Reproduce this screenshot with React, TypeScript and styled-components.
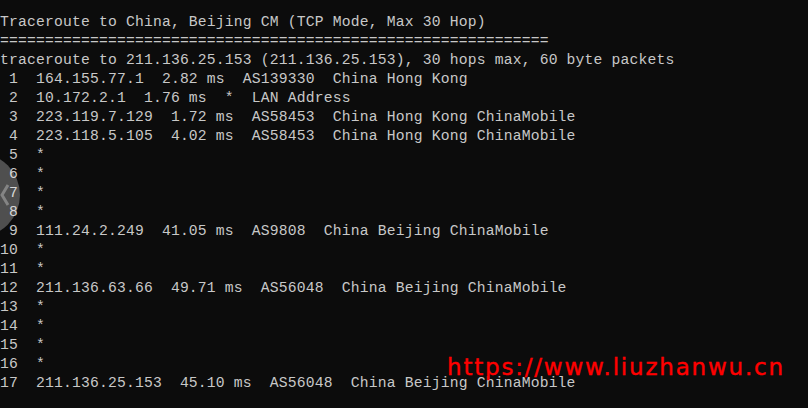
import React from "react";
import styled, { createGlobalStyle } from "styled-components";

const Global = createGlobalStyle`
  html, body { margin: 0; padding: 0; background: #0c0c0c; }
  #root { width: 808px; height: 408px; overflow: hidden; }
`;

const Terminal = styled.div`
  position: relative;
  width: 808px;
  height: 408px;
  box-sizing: border-box;
  padding: 12.6px 0 0 0;
  background: #0c0c0c;
  color: #c8c8c8;
  font-family: "Liberation Mono", "DejaVu Sans Mono", monospace;
  font-size: 14.7px;
  letter-spacing: 0.18px;
  line-height: 19px;
  overflow: hidden;
`;

const Line = styled.div`
  white-space: pre;
  height: 19px;
`;

const SideButton = styled.div`
  position: absolute;
  left: -64px;
  top: 153px;
  width: 84px;
  height: 84px;
  border-radius: 50%;
  background: rgba(255, 255, 255, 0.28);
  display: flex;
  align-items: center;
  justify-content: flex-end;
  padding-right: 10px;
  box-sizing: border-box;
`;

const Watermark = styled.div`
  position: absolute;
  left: 447px;
  top: 356px;
  color: #ff0000;
  font-family: "DejaVu Sans", sans-serif;
  font-size: 23px;
  line-height: 1;
  letter-spacing: 1.8px;
  white-space: nowrap;
  -webkit-text-stroke: 0.4px #ff0000;
`;

const lines = [
  "Traceroute to China, Beijing CM (TCP Mode, Max 30 Hop)",
  "=".repeat(61),
  "traceroute to 211.136.25.153 (211.136.25.153), 30 hops max, 60 byte packets",
  " 1  164.155.77.1  2.82 ms  AS139330  China Hong Kong",
  " 2  10.172.2.1  1.76 ms  *  LAN Address",
  " 3  223.119.7.129  1.72 ms  AS58453  China Hong Kong ChinaMobile",
  " 4  223.118.5.105  4.02 ms  AS58453  China Hong Kong ChinaMobile",
  " 5  *",
  " 6  *",
  " 7  *",
  " 8  *",
  " 9  111.24.2.249  41.05 ms  AS9808  China Beijing ChinaMobile",
  "10  *",
  "11  *",
  "12  211.136.63.66  49.71 ms  AS56048  China Beijing ChinaMobile",
  "13  *",
  "14  *",
  "15  *",
  "16  *",
  "17  211.136.25.153  45.10 ms  AS56048  China Beijing ChinaMobile",
];

export default function App() {
  return (
    <Terminal>
      <Global />
      {lines.map((l, i) => (
        <Line key={i}>{l}</Line>
      ))}
      <SideButton>
        <svg width="10" height="22" viewBox="0 0 10 22">
          <path d="M8 1 L2 11 L8 21" fill="none" stroke="rgba(255,255,255,0.3)" strokeWidth="3" />
        </svg>
      </SideButton>
      <Watermark>https://www.liuzhanwu.cn</Watermark>
    </Terminal>
  );
}
